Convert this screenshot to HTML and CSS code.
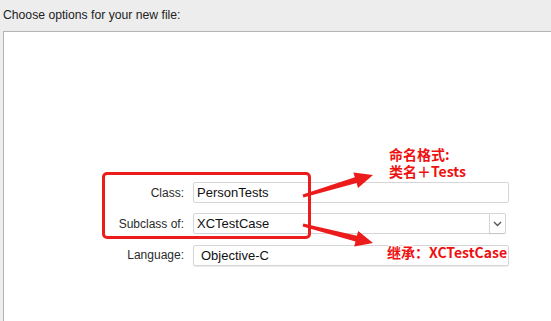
FILE: index.html
```html
<!DOCTYPE html>
<html>
<head>
<meta charset="utf-8">
<link rel="stylesheet" href="styles.css">
</head>
<body>
<div class="title">Choose options for your new file:</div>
<div class="panel">
  <div class="form">
    <div class="label">Class:</div>
    <div class="field"><span class="val">PersonTests</span></div>
    <div class="label">Subclass of:</div>
    <div class="field combo"><span class="val">XCTestCase</span><span class="btn"><svg width="9" height="6" viewBox="0 0 9 6"><path d="M1 1 L4.5 4.5 L8 1" fill="none" stroke="#555" stroke-width="1.4"/></svg></span></div>
    <div class="label">Language:</div>
    <div class="field popup"><span class="val lang">Objective-C</span><span class="caret"><svg width="9" height="6" viewBox="0 0 9 6"><path d="M1 5 L4.5 1.5 L8 5" fill="none" stroke="#555" stroke-width="1.4"/></svg></span></div>
  </div>
  <div class="redbox"></div>
  <svg class="arrows" width="551" height="321" viewBox="0 0 551 321">
    <path d="M302.6 194.6 L354.8 177.3 L353.4 172.5 L373 175 L358 187.9 L356.6 183.1 L303.4 197.4 Z" fill="#ec1c1c"/>
    <path d="M303.4 223.5 L356.9 235.8 L358.2 231 L373 243 L354.2 246.4 L355.5 241.6 L302.6 226.5 Z" fill="#ec1c1c"/>
  </svg>
  <div class="note note1">命名格式:
类名＋Tests</div>
  <div class="note note2">继承：XCTestCase</div>
</div>
</body>
</html>
```
FILE: styles.css
```css
html, body {
  margin: 0;
  padding: 0;
  width: 551px;
  height: 321px;
  overflow: hidden;
  background: #ededed;
  font-family: "Liberation Sans", Arial, sans-serif;
  color: #222;
}
.title {
  font-size: 12.2px;
  line-height: 16px;
  padding: 7px 0 8px 3px;
  height: 16px;
}
.panel {
  margin-left: 3px;
  height: 290px;
  background: #fff;
  border-left: 1px solid #b4b4b4;
  border-top: 1px solid #b4b4b4;
}
.form {
  display: grid;
  grid-template-columns: 90px 316px;
  column-gap: 9px;
  row-gap: 10px;
  margin-left: 90px;
  padding-top: 150px;
  align-items: center;
}
.label {
  text-align: right;
  font-size: 12px;
  color: #2a2a2a;
}
.field {
  height: 19px;
  border: 1px solid #d6d6d6;
  border-radius: 2px;
  display: flex;
  align-items: center;
  font-size: 13px;
  color: #111;
  position: relative;
}
.val { padding-left: 3px; }
.val.lang { padding-left: 7px; font-size: 13px; }
.combo { margin-right: 3px; }
.combo .val { flex: 1; }
.btn {
  width: 15px;
  height: 19px;
  border-left: 1px solid #d6d6d6;
  display: flex;
  align-items: center;
  justify-content: center;
  box-shadow: 0 1px 1px rgba(0,0,0,0.08);
}
.popup { margin-top: 1px; box-shadow: 0 1px 1px rgba(0,0,0,0.08); }
.caret {
  position: absolute;
  right: 3px;
  top: 0px;
}
.redbox {
  position: absolute;
  left: 102px;
  top: 172px;
  width: 203px;
  height: 61px;
  border: 3px solid #ec1c1c;
  border-radius: 5px;
}
.arrows {
  position: absolute;
  left: 0;
  top: 0;
}
.note {
  position: absolute;
  color: #ee1111;
  font-family: "Noto Sans CJK SC", "Liberation Sans", sans-serif;
  font-weight: bold;
  font-size: 14px;
  line-height: 17px;
  white-space: pre-line;
  text-shadow: 1px 0 0 #fff, -1px 0 0 #fff, 0 1px 0 #fff, 0 -1px 0 #fff, 1px 1px 0 #fff, -1px -1px 0 #fff, 1px -1px 0 #fff, -1px 1px 0 #fff;
}
.note1 { left: 389px; top: 146px; }
.note2 { left: 387px; top: 244px; }
```
